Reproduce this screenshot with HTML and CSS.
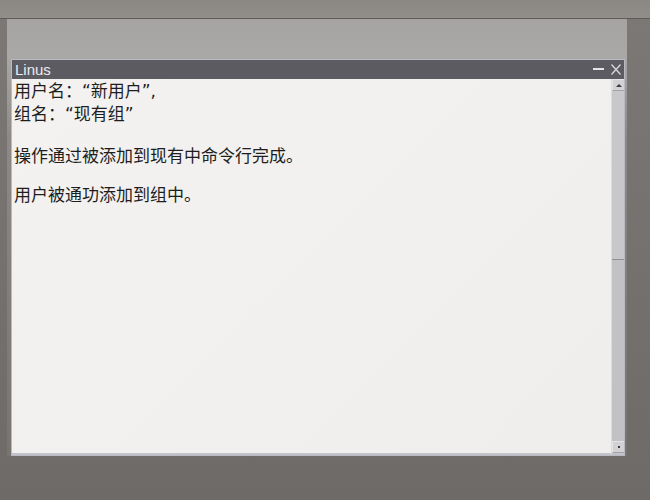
FILE: index.html
```html
<!DOCTYPE html>
<html lang="zh-CN">
<head>
<meta charset="utf-8">
<title>Linus</title>
<link rel="stylesheet" href="styles.css">
</head>
<body>
<div class="bezel-top"></div>
<div class="screen">
  <div class="window">
    <div class="titlebar">
      <span class="title">Linus</span>
      <div class="controls">
        <span class="min"></span>
        <svg class="close" width="10" height="11" viewBox="0 0 10 11"><path d="M0.5 0.5 L9.5 10.5 M9.5 0.5 L0.5 10.5" stroke="#d8d8dc" stroke-width="1.3" fill="none"/></svg>
      </div>
    </div>
    <div class="body">
      <div class="content">
        <p class="block">用户名：<span class="q">“</span>新用户<span class="q">”,</span><br>组名：<span class="q">“</span>现有组<span class="q">”</span></p>
        <p class="block gap1">操作通过被添加到现有中命令行完成。</p>
        <p class="block gap2">用户被通功添加到组中。</p>
      </div>
      <div class="scrollbar">
        <div class="btn up"><span class="tri"></span></div>
        <div class="thumb"></div>
        <div class="track"></div>
        <div class="btn down"><span class="dot"></span></div>
      </div>
    </div>
  </div>
</div>
</body>
</html>
```

FILE: styles.css
```css
html, body {
  margin: 0;
  padding: 0;
}
body {
  width: 650px;
  height: 500px;
  overflow: hidden;
  background: linear-gradient(#7c7875, #6e6a67);
  font-family: "Noto Sans CJK SC", sans-serif;
}
.bezel-top {
  height: 18px;
  background: linear-gradient(#8b8884, #918e8a);
  border-bottom: 1px solid #5e5b59;
}
.screen {
  width: 620px;
  height: 437px;
  margin-left: 7px;
  padding: 40px 0 0 4px;
  box-sizing: border-box;
  background: linear-gradient(#a6a4a2 0px, #aaa8a6 38px, #8c8986 120px, #78746f 437px);
}
.window {
  width: 614px;
  height: 397px;
  display: flex;
  flex-direction: column;
  border: 1px solid #b9b9c2;
  box-sizing: border-box;
  background: #f2f1ef;
}
.titlebar {
  height: 19px;
  flex: none;
  background: #5d5b62;
  display: flex;
  align-items: center;
  justify-content: space-between;
  padding: 0 3px 0 3px;
}
.title {
  font-family: "Liberation Sans", Arial, sans-serif;
  font-size: 15px;
  color: #ececf0;
  line-height: 19px;
}
.controls {
  display: flex;
  align-items: center;
  gap: 7px;
}
.min {
  width: 11px;
  height: 2px;
  background: #e4e4e8;
  margin-top: -1px;
}
.close {
  display: block;
}
.body {
  flex: 1;
  display: flex;
  min-height: 0;
}
.content {
  flex: 1;
  padding: 0 0 0 2px;
  background: linear-gradient(135deg, #f3f2f0, #efeeec);
  border-bottom: 2px solid #c3c3cc;
}
.block {
  margin: 0;
  font-size: 17px;
  line-height: 21px;
  color: #1e1e1e;
}
.q {
  font-family: "DejaVu Sans", sans-serif;
}
.gap1 {
  margin-top: 19px;
}
.gap2 {
  margin-top: 18px;
}
.scrollbar {
  width: 12px;
  flex: none;
  display: flex;
  flex-direction: column;
  background: #c2c2c5;
  border-left: 1px solid #dcdcde;
  border-bottom: 2px solid #c3c3cc;
}
.btn {
  height: 12px;
  flex: none;
  background: #d2d2d4;
  border-top: 1px solid #e4e4e6;
  border-left: 1px solid #e4e4e6;
  border-bottom: 1px solid #a4a4aa;
  box-sizing: border-box;
  display: flex;
  align-items: center;
  justify-content: center;
}
.tri {
  width: 0;
  height: 0;
  border-left: 3px solid transparent;
  border-right: 3px solid transparent;
  border-bottom: 3px solid #3a3a40;
}
.dot {
  width: 2px;
  height: 2px;
  background: #3a3a40;
}
.thumb {
  height: 168px;
  flex: none;
  background: #c8c8cb;
  border-bottom: 1px solid #8e8e98;
}
.track {
  flex: 1;
  background: #c2c2c5;
}
```
